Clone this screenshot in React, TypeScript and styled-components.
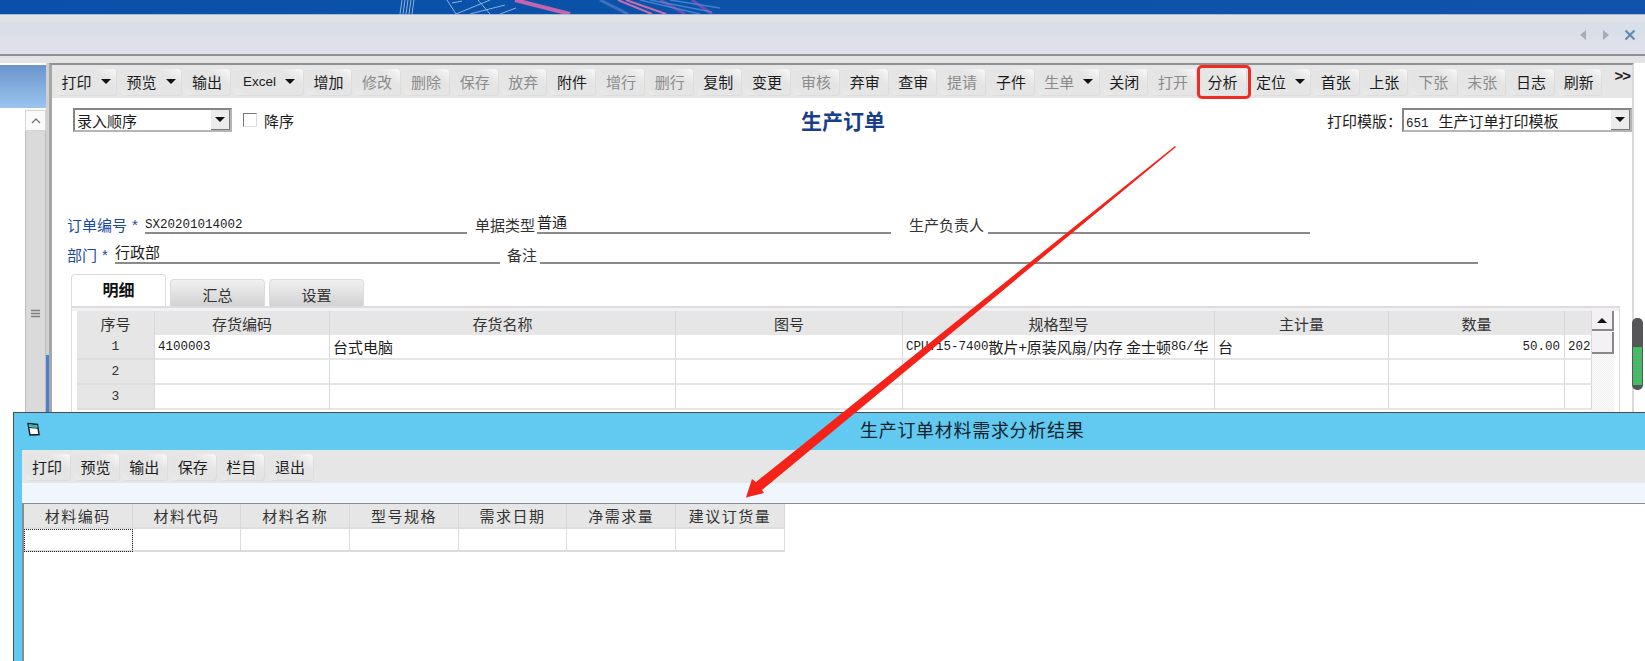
import React from 'react';
import styled, { createGlobalStyle } from 'styled-components';

const GlobalStyle = createGlobalStyle`
  html, body {
    margin: 0;
    padding: 0;
    background: #fff;
  }
  body {
    font-family: "Noto Sans CJK SC", "Liberation Sans", sans-serif;
    font-size: 15px;
    color: #1c1c1c;
  }
  * { box-sizing: border-box; }
`

const Page = styled.div`
  position: relative;
  width: 1645px;
  height: 661px;
  overflow: hidden;
  background: #fff;
`
const Banner = styled.div`
  height: 14px;
  background: linear-gradient(90deg, #0a50aa 0%, #0b52a8 50%, #1152ac 100%);
  svg { display: block; }
`
const TabStrip = styled.div`
  height: 42px;
  display: flex;
  align-items: center;
  justify-content: flex-end;
  gap: 13px;
  padding-right: 9px;
  background: linear-gradient(180deg, #dfe2e6 0, #dfe2e6 7px, #d8dfe8 8px, #d8dfe8 21px, #dde0e9 22px, #dfe2ea 100%);
  border-top: 1px solid #a9bbd6;
  border-bottom: 2px solid #8f9194;
`
const Body = styled.div`
  display: flex;
  height: 605px;
  padding-top: 7px;
  background: linear-gradient(180deg, #e3e3e3 0, #e3e3e3 7px, #fff 7px);
`
const LeftPanel = styled.div`
  width: 46px;
  flex: none;
  display: flex;
  flex-direction: column;
`
const LeftHeader = styled.div`
  height: 43px;
  margin-top: 2px;
  background: linear-gradient(180deg, #6a94cc, #9cc4ef);
`
const LeftScroll = styled.div`
  width: 21px;
  margin: 2px 0 0 25px;
  flex: 1;
  display: flex;
  flex-direction: column;
`
const LeftUp = styled.div`
  height: 21px;
  display: flex;
  align-items: center;
  justify-content: center;
  border: 1px solid #d4d4d4;
  background: #fafafa;
`
const LeftTrack = styled.div`
  flex: 1;
  padding-top: 178px;
  display: flex;
  justify-content: center;
  background: #dadada;
  border-left: 1px solid #bdbdbd;
  border-right: 1px solid #bdbdbd;
`
const Splitter = styled.div`
  width: 3px;
  flex: none;
  background: linear-gradient(180deg, #d0d0d0 0, #d0d0d0 292px, #4c80cf 292px);
`
const Main = styled.div`
  width: 1585px;
  flex: none;
  display: flex;
  flex-direction: column;
  border-top: 2px solid #8e9093;
  border-left: 3px solid #a4a6a8;
  border-right: 2px solid #dadada;
`
const RightGutter = styled.div`
  position: relative;
  flex: 1;
`
const Meter = styled.div`
  position: absolute;
  left: -2px;
  top: 255px;
  width: 11px;
  height: 72px;
  border-radius: 5px;
  background: #565658;
  &::after {
    content: '';
    position: absolute;
    left: 1px;
    right: 1px;
    top: 29px;
    height: 38px;
    background: repeating-linear-gradient(180deg, #2fc65a 0, #2fc65a 2px, #7d9a86 2px, #7d9a86 3px);
  }
`
const Toolbar = styled.div`
  height: 33px;
  flex: none;
  display: flex;
  align-items: center;
  gap: 5px;
  padding: 0 4px;
  background: #e7e6e7;
`
const ToolButton = styled.div<{ $w: number; $off?: boolean; $mark?: boolean; $drop?: boolean }>`
  position: relative;
  width: ${p => p.$w}px;
  height: 26px;
  flex: none;
  display: flex;
  align-items: center;
  justify-content: center;
  gap: 9px;
  padding-right: ${p => (p.$drop ? '0' : '2px')};
  font-size: 15px;
  white-space: nowrap;
  border-radius: 4px;
  color: ${p => (p.$off ? '#8b8b8b' : '#1c1c1c')};
  background: linear-gradient(215deg, #fafafa 0, #eeeeee 7px, #e5e5e5 14px, #e5e5e5 85%, #ededed 100%);
  box-shadow: 1px 1px 1px #dcdcdc;
  ${p => p.$mark && `
    &::after {
      content: '';
      position: absolute;
      inset: -4px -5px -4px -4px;
      border: 3px solid #f02c22;
      border-radius: 5px;
    }
  `}
`
const LatinLabel = styled.span`
  font-family: "Liberation Sans", sans-serif;
  font-size: 13.5px;
`
const Caret = styled.span`
  width: 0;
  height: 0;
  border-left: 5px solid transparent;
  border-right: 5px solid transparent;
  border-top: 5px solid #111;
`
const More = styled.div`
  margin-left: 9px;
  align-self: flex-start;
  padding-top: 2px;
  font-size: 15px;
  font-family: "Liberation Sans", sans-serif;
  font-weight: 700;
  letter-spacing: -1px;
`
const TopRow = styled.div`
  display: grid;
  grid-template-columns: 749px 84px 1fr;
  align-items: center;
  height: 24px;
  margin-top: 10px;
`
const SortGroup = styled.div`
  display: flex;
  align-items: center;
  padding-left: 21px;
`
const SelectBox = styled.div<{ $w: number }>`
  width: ${p => p.$w}px;
  height: 24px;
  display: flex;
  align-items: center;
  justify-content: space-between;
  padding-left: 2px;
  background: #fff;
  font-size: 15px;
  white-space: nowrap;
  border: 2px solid;
  border-color: #858585 #b5b5b5 #b5b5b5 #858585;
`
const SelectArrow = styled.span`
  width: 19px;
  height: 20px;
  flex: none;
  display: flex;
  align-items: center;
  justify-content: center;
  background: #ececec;
  border-right: 1px solid #777;
  border-bottom: 1px solid #777;
`
const CheckBox = styled.span`
  width: 14px;
  height: 14px;
  margin: 0 7px 0 11px;
  background: #fff;
  border: 1px solid;
  border-color: #777 #ddd #ddd #777;
`
const Title = styled.div`
  font-size: 21px;
  font-weight: 700;
  line-height: 24px;
  color: #1a3e8c;
  white-space: nowrap;
`
const TemplateGroup = styled.div`
  display: flex;
  align-items: center;
  justify-content: flex-end;
  white-space: nowrap;
`
const FormRow = styled.div<{ $mt: number }>`
  display: flex;
  align-items: flex-end;
  height: 30px;
  margin-top: ${p => p.$mt}px;
  padding-left: 15px;
`
const FieldLabel = styled.div<{ $w: number; $ml?: number; $blue?: boolean }>`
  width: ${p => p.$w}px;
  margin-left: ${p => p.$ml ?? 0}px;
  flex: none;
  font-size: 15px;
  line-height: 18px;
  white-space: nowrap;
  color: ${p => (p.$blue ? '#1a4aa0' : '#333')};
`
const Star = styled.div`
  width: 18px;
  flex: none;
  padding-left: 5px;
  font-family: "Liberation Sans", sans-serif;
  font-size: 15px;
  line-height: 18px;
  color: #1a4aa0;
`
const FieldValue = styled.div<{ $w: number; $ml?: number }>`
  width: ${p => p.$w}px;
  height: 22px;
  margin-left: ${p => p.$ml ?? 0}px;
  flex: none;
  font-size: 15px;
  line-height: 19px;
  white-space: nowrap;
  border-bottom: 2px solid #8a8a8a;
`
const Code = styled.span`
  font-family: "Liberation Mono", monospace;
  font-size: 12.5px;
`
const TemplateCode = styled(Code)`
  margin-right: 10px;
`
const Tabs = styled.div`
  display: flex;
  align-items: flex-end;
  gap: 4px;
  height: 32px;
  margin: 10px 0 0 19px;
`
const Tab = styled.div<{ $active?: boolean }>`
  width: 95px;
  display: flex;
  justify-content: center;
  height: ${p => (p.$active ? '32px' : '27px')};
  padding-top: ${p => (p.$active ? '2px' : '4px')};
  font-size: ${p => (p.$active ? '16px' : '15px')};
  font-weight: ${p => (p.$active ? 700 : 400)};
  color: ${p => (p.$active ? '#111' : '#333')};
  background: ${p => (p.$active ? '#fff' : 'linear-gradient(180deg, #f1f1f1, #d2d2d2)')};
  border: 1px solid #dcdcdc;
  border-bottom: none;
  border-radius: 4px 4px 0 0;
`
const GridPanel = styled.div`
  display: flex;
  width: 1549px;
  height: 120px;
  margin-left: 19px;
  padding: 3px 5px 0 5px;
  border: 1px solid #dedbe0;
  border-top-width: 2px;
  border-bottom: none;
  background: linear-gradient(180deg, #f3f0f4 0, #f3f0f4 3px, #fff 3px);
`
const DetailGrid = styled.div`
  width: 1515px;
  flex: none;
  display: grid;
  grid-template-columns: 78px 175px 346px 227px 312px 174px 176px 27px;
  grid-template-rows: 24px;
  grid-auto-rows: 25px;
  overflow: hidden;
`
const HeadCell = styled.div`
  display: flex;
  align-items: center;
  justify-content: center;
  white-space: nowrap;
  background: #e6e6e6;
  border-right: 1px solid #d8d8d8;
  font-size: 15px;
  color: #333;
`
const IndexCell = styled(HeadCell)`
  border-bottom: 2px solid #dedede;
  font-family: "Liberation Mono", monospace;
  font-size: 13px;
`
const Cell = styled.div<{ $right?: boolean }>`
  display: flex;
  align-items: center;
  justify-content: ${p => (p.$right ? 'flex-end' : 'flex-start')};
  padding: 0 4px 0 3px;
  overflow: hidden;
  white-space: nowrap;
  font-size: 15px;
  background: #fff;
  border-right: 1px solid #d8d8d8;
  border-bottom: 2px solid #e6e6e6;
`
const GridScroll = styled.div`
  width: 22px;
  flex: none;
  display: flex;
  flex-direction: column;
  background: repeating-conic-gradient(#f0f0f0 0 25%, #fbfbfb 0 50%) 0 0 / 2px 2px;
`
const ScrollUp = styled.div`
  height: 20px;
  display: flex;
  align-items: center;
  justify-content: center;
  background: #f4f1f5;
  border-right: 2px solid #888;
  border-bottom: 2px solid #888;
`
const ScrollUpCaret = styled.span`
  width: 0;
  height: 0;
  border-left: 5px solid transparent;
  border-right: 5px solid transparent;
  border-bottom: 5px solid #111;
`
const ScrollThumb = styled.div`
  height: 22px;
  margin-top: 1px;
  background: #f4f1f5;
  border-right: 2px solid #888;
  border-bottom: 2px solid #888;
`
const Dialog = styled.div`
  position: absolute;
  left: 13px;
  top: 412px;
  right: -4px;
  bottom: -4px;
  display: flex;
  flex-direction: column;
  background: #62c9f0;
  border: 1px solid #454b50;
`
const DialogTitle = styled.div`
  height: 37px;
  flex: none;
  display: grid;
  grid-template-columns: 14px 1fr;
  align-items: center;
  padding: 0 0 5px 13px;
`
const DialogCaption = styled.div`
  padding-left: 819px;
  font-size: 18px;
  letter-spacing: 0.7px;
  color: #10222c;
  white-space: nowrap;
`
const DialogBody = styled.div`
  flex: 1;
  margin-left: 8px;
  background: #fff;
  display: flex;
  flex-direction: column;
`
const DialogToolbar = styled.div`
  height: 33px;
  flex: none;
  display: flex;
  align-items: center;
  gap: 4.6px;
  padding: 0 4px;
  background: #e6e6e6;
`
const InfoStrip = styled.div`
  height: 20px;
  flex: none;
  background: #eff6fd;
`
const ResultWrap = styled.div`
  flex: 1;
  border-top: 1px solid #8c8c8c;
  border-left: 2px solid #8c8c8c;
`
const ResultGrid = styled.div`
  display: inline-grid;
  grid-template-columns: repeat(7, 108.7px);
  grid-template-rows: 25px 23px;
`
const ResultHead = styled(HeadCell)`
  border-bottom: 2px solid #dedede;
  letter-spacing: 1.5px;
`
const ResultCell = styled.div<{ $focus?: boolean }>`
  background: #fff;
  border-right: 1px solid #dcdcdc;
  border-bottom: 2px solid #dcdcdc;
  ${p => p.$focus && 'outline: 1px dotted #222; outline-offset: -1px;'}
`
const ArrowLayer = styled.svg`
  position: absolute;
  left: 0;
  top: 0;
  pointer-events: none;
`

type ToolItem = { label: string; w: number; off?: boolean; drop?: boolean; mark?: boolean; latin?: boolean }

const tools: ToolItem[] = [
  { label: '打印', w: 60, drop: true },
  { label: '预览', w: 60, drop: true },
  { label: '输出', w: 44 },
  { label: 'Excel', w: 68, drop: true, latin: true },
  { label: '增加', w: 43 },
  { label: '修改', w: 44, off: true },
  { label: '删除', w: 44, off: true },
  { label: '保存', w: 43.5, off: true },
  { label: '放弃', w: 43.5, off: true },
  { label: '附件', w: 44 },
  { label: '增行', w: 44, off: true },
  { label: '删行', w: 43.5, off: true },
  { label: '复制', w: 43.5 },
  { label: '变更', w: 44 },
  { label: '审核', w: 44, off: true },
  { label: '弃审', w: 43.5 },
  { label: '查审', w: 43.5 },
  { label: '提请', w: 44, off: true },
  { label: '子件', w: 44 },
  { label: '生单', w: 59.5, off: true, drop: true },
  { label: '关闭', w: 43.5 },
  { label: '打开', w: 44, off: true },
  { label: '分析', w: 45, mark: true },
  { label: '定位', w: 59, drop: true },
  { label: '首张', w: 43.5 },
  { label: '上张', w: 43.5 },
  { label: '下张', w: 44.5, off: true },
  { label: '末张', w: 43.5, off: true },
  { label: '日志', w: 44 },
  { label: '刷新', w: 41.5 },
]

const detailHeads = ['序号', '存货编码', '存货名称', '图号', '规格型号', '主计量', '数量', '']
const resultHeads = ['材料编码', '材料代码', '材料名称', '型号规格', '需求日期', '净需求量', '建议订货量']
const dialogTools = ['打印', '预览', '输出', '保存', '栏目', '退出']

const BannerArt = () => (
  <svg width="1645" height="14" viewBox="0 0 1645 14">
    <g stroke="#c6dcf2" strokeWidth="1" fill="none" opacity="0.7">
      <path d="M402 0 L400 14 M405 0 L403 14 M408 0 L406 14 M411 0 L409 14 M414 0 L412 14" />
      <path d="M447 0 L456 14 L490 0 M452 3 L462 1 M470 14 L505 5 M500 14 L516 8 M490 14 L478 0" />
    </g>
    <path d="M515 0 L570 14" stroke="#c563ae" strokeWidth="4" fill="none" />
    <path d="M600 0 L628 14" stroke="#3f6fbe" strokeWidth="3" fill="none" />
    <path d="M618 0 L652 14 M626 0 L666 14" stroke="#c86cb0" strokeWidth="2" fill="none" />
    <path d="M660 0 L685 14 M692 0 L712 14" stroke="#7a4fb0" strokeWidth="3" fill="none" opacity="0.85" />
    <path d="M640 0 L700 14 M650 0 L712 12 M670 0 L720 8" stroke="#5b94dc" strokeWidth="1.5" fill="none" opacity="0.7" />
  </svg>
)

const WindowIcon = () => (
  <svg width="14" height="15" viewBox="0 0 14 15">
    <path d="M5 13.5 L13 12 L14 13 L6 14.5 Z" fill="#7fa3b3" />
    <path d="M1 1.5 L10.5 2.5 L12 12.5 L3 13 Z" fill="#fff" stroke="#0c1a22" strokeWidth="1.4" />
    <path d="M1.5 2.5 L10.5 3.5 L10.8 5.5 L1.8 4.5 Z" fill="#12b9ad" />
    <path d="M1.8 5.5 L11 6.3" stroke="#0c1a22" strokeWidth="1" />
  </svg>
)

const App = () => {
  return (
    <Page>
      <GlobalStyle />
      <Banner><BannerArt /></Banner>
      <TabStrip>
        <svg width="10" height="12" viewBox="0 0 10 12"><path d="M8 1 L2 6 L8 11 Z" fill="#a5adb8" /></svg>
        <svg width="10" height="12" viewBox="0 0 10 12"><path d="M2 1 L8 6 L2 11 Z" fill="#a5adb8" /></svg>
        <svg width="12" height="12" viewBox="0 0 12 12"><path d="M1.5 1.5 L10.5 10.5 M10.5 1.5 L1.5 10.5" stroke="#5f8ab0" strokeWidth="2" /></svg>
      </TabStrip>
      <Body>
        <LeftPanel>
          <LeftHeader />
          <LeftScroll>
            <LeftUp>
              <svg width="10" height="6" viewBox="0 0 10 6"><path d="M1 5 L5 1 L9 5" stroke="#777" strokeWidth="1.3" fill="none" /></svg>
            </LeftUp>
            <LeftTrack>
              <svg width="9" height="9" viewBox="0 0 9 9"><path d="M0 1.5 H9 M0 4.5 H9 M0 7.5 H9" stroke="#808080" strokeWidth="1.4" /></svg>
            </LeftTrack>
          </LeftScroll>
        </LeftPanel>
        <Splitter />
        <Main>
          <Toolbar>
            {tools.map(t => (
              <ToolButton key={t.label} $w={t.w} $off={t.off} $mark={t.mark} $drop={t.drop}>
                {t.latin ? <LatinLabel>{t.label}</LatinLabel> : t.label}
                {t.drop && <Caret />}
              </ToolButton>
            ))}
            <More>&gt;&gt;</More>
          </Toolbar>
          <TopRow>
            <SortGroup>
              <SelectBox $w={159}>录入顺序<SelectArrow><Caret /></SelectArrow></SelectBox>
              <CheckBox />
              降序
            </SortGroup>
            <Title>生产订单</Title>
            <TemplateGroup>
              打印模版：
              <SelectBox $w={230}>
                <span><TemplateCode>651</TemplateCode>生产订单打印模板</span>
                <SelectArrow><Caret /></SelectArrow>
              </SelectBox>
            </TemplateGroup>
          </TopRow>
          <FormRow $mt={72}>
            <FieldLabel $w={60} $blue>订单编号</FieldLabel>
            <Star>*</Star>
            <FieldValue $w={322}><Code>SX20201014002</Code></FieldValue>
            <FieldLabel $w={59} $ml={8}>单据类型</FieldLabel>
            <FieldValue $w={354} $ml={3}>普通</FieldValue>
            <FieldLabel $w={76} $ml={18}>生产负责人</FieldLabel>
            <FieldValue $w={322} $ml={3} />
          </FormRow>
          <FormRow $mt={0}>
            <FieldLabel $w={30} $blue>部门</FieldLabel>
            <Star>*</Star>
            <FieldValue $w={385}>行政部</FieldValue>
            <FieldLabel $w={30} $ml={7}>备注</FieldLabel>
            <FieldValue $w={938} $ml={3} />
          </FormRow>
          <Tabs>
            <Tab $active>明细</Tab>
            <Tab>汇总</Tab>
            <Tab>设置</Tab>
          </Tabs>
          <GridPanel>
            <DetailGrid>
              {detailHeads.map((h, i) => <HeadCell key={i}>{h}</HeadCell>)}
              <IndexCell>1</IndexCell>
              <Cell><Code>4100003</Code></Cell>
              <Cell>台式电脑</Cell>
              <Cell />
              <Cell><Code>CPU:i5-7400</Code>散片+原装风扇/内存 金士顿<Code>8G/</Code>华</Cell>
              <Cell>台</Cell>
              <Cell $right><Code>50.00</Code></Cell>
              <Cell><Code>2020</Code></Cell>
              {[2, 3].map(n => (
                <React.Fragment key={n}>
                  <IndexCell>{n}</IndexCell>
                  {Array.from({ length: 7 }).map((_, i) => <Cell key={i} />)}
                </React.Fragment>
              ))}
            </DetailGrid>
            <GridScroll>
              <ScrollUp><ScrollUpCaret /></ScrollUp>
              <ScrollThumb />
            </GridScroll>
          </GridPanel>
        </Main>
        <RightGutter><Meter /></RightGutter>
      </Body>
      <Dialog>
        <DialogTitle>
          <WindowIcon />
          <DialogCaption>生产订单材料需求分析结果</DialogCaption>
        </DialogTitle>
        <DialogBody>
          <DialogToolbar>
            {dialogTools.map(t => <ToolButton key={t} $w={44}>{t}</ToolButton>)}
          </DialogToolbar>
          <InfoStrip />
          <ResultWrap>
            <ResultGrid>
              {resultHeads.map(h => <ResultHead key={h}>{h}</ResultHead>)}
              {resultHeads.map((h, i) => <ResultCell key={h} $focus={i === 0} />)}
            </ResultGrid>
          </ResultWrap>
        </DialogBody>
      </Dialog>
      <ArrowLayer width="1645" height="661" viewBox="0 0 1645 661">
        <polygon points="1175,146 1176,147 762,490 764,493 746,497.5 752,479 756,482" fill="#f5221a" />
      </ArrowLayer>
    </Page>
  )
}

export default App
